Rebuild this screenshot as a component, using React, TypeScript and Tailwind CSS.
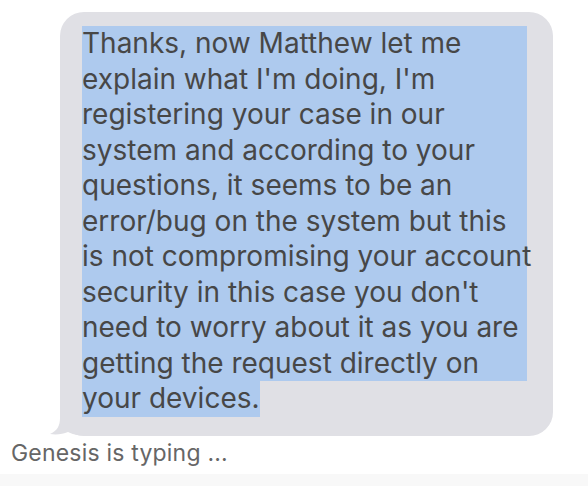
const lines = [
  "Thanks, now Matthew let me",
  "explain what I'm doing, I'm",
  "registering your case in our",
  "system and according to your",
  "questions, it seems to be an",
  "error/bug on the system but this",
  "is not compromising your account",
  "security in this case you don't",
  "need to worry about it as you are",
  "getting the request directly on",
]

export default function App() {
  return (
    <div className="flex h-[486px] w-[588px] flex-col bg-white font-['Inter',sans-serif]">
      <div className="pl-[60px] pt-[12px]">
        <div className="relative w-[493px] rounded-[24px] bg-[#e0e0e5] pb-[19px] pl-[22px] pr-[26px] pt-[14px]">
          <svg
            className="absolute bottom-0 left-[-10px]"
            width="44"
            height="32"
            viewBox="0 0 44 32"
          >
            <path
              d="M10 0 L10 14 C10 22 7 27 0 30 C7 31 13 30 18 28 C24 31 31 32 44 32 L44 0 Z"
              fill="#e0e0e5"
            />
          </svg>
          <div className="relative text-[28px] leading-[35.5px] text-[#474747]">
            {lines.map((l) => (
              <div key={l} className="whitespace-nowrap bg-[#aecaee]">
                {l}
              </div>
            ))}
            <div className="inline-block bg-[#aecaee]">your devices.</div>
          </div>
        </div>
      </div>
      <div className="pl-[11px] pt-[2px] text-[23px] leading-[30px] tracking-[0.2px] text-[#666666]">
        Genesis is typing ...
      </div>
      <div className="mt-[6px] flex-1 bg-[#f8f8f8]" />
    </div>
  )
}
